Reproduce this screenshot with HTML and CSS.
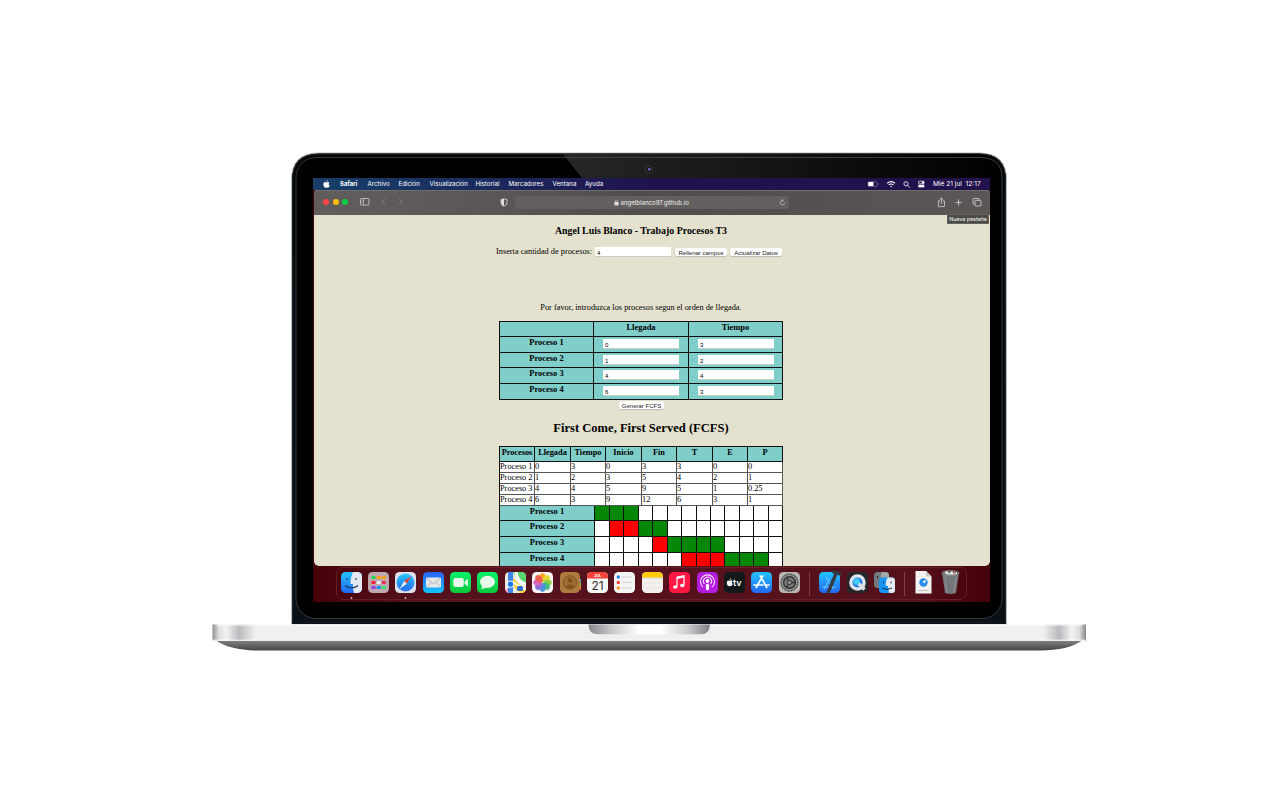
FILE: index.html
```html
<!DOCTYPE html>
<html lang="es">
<head>
<meta charset="utf-8">
<title>Trabajo Procesos T3</title>
<link rel="stylesheet" href="styles.css">
</head>
<body>
<main class="laptop">
  <section class="lid">
    <svg class="lid-art" width="716" height="473" viewBox="0 0 716 473">
      <defs>
        <linearGradient id="glare"><stop offset="0" stop-color="#272727"/><stop offset=".25" stop-color="#1c1c1c"/><stop offset="1" stop-color="#000"/></linearGradient>
        <linearGradient id="edge" x2="0" y2="1"><stop offset="0" stop-color="#050707"/><stop offset="1" stop-color="#0a1116"/></linearGradient>
      </defs>
      <path d="M.5 472.500V28Q.5 1 28 1H688Q715.500 1 715.500 28V472.500Z" fill="url(#edge)" stroke="#b6b8ba" stroke-width="1"/>
      <path d="M1.500 471V28.500Q1.500 2 28 2H688Q714.500 2 714.500 28.500V471" fill="none" stroke="#20272b"/>
      <rect x="5" y="5.500" width="706" height="461" rx="20" fill="#000" stroke="#31373b"/>
      <path d="M272 2H688Q712 3 712 28V50H300L291 26Z" fill="url(#glare)"/>
      <path d="M274 5.500H690Q711 6 711 26V50" fill="none" stroke="#3b4144"/>
      <circle cx="358" cy="17.500" r="3.500" fill="#151517" stroke="#414148" stroke-width=".8"/>
      <circle cx="358.300" cy="17.300" r="1.400" fill="#6c6bc0"/>
      <path d="M1 470.500H715" stroke="#171724"/>
    </svg>
    <div class="screen">
      <header class="menubar">
        <svg class="apple" width="7" height="8" viewBox="0 0 14 16"><path fill="#fff" d="M9.500 0Q9.800 2.500 7 3.800Q6.700 1.300 9.500 0M7 5Q8 4 10 4Q12 4.200 13 5.600Q9.600 8 13.400 11Q12 15.500 9.600 15.500Q7 14.600 5 15.500Q2.500 15.500 1 11Q-.3 5.500 3.500 4.200Q5 4 7 5"/></svg>
        <nav class="menus"><b class="m1">Safari</b><span class="m2">Archivo</span><span class="m3">Edición</span><span class="m4">Visualización</span><span class="m5">Historial</span><span class="m6">Marcadores</span><span class="m7">Ventana</span><span>Ayuda</span></nav>
        <svg class="status" width="60" height="9" viewBox="0 0 60 9" fill="none" stroke="#fff">
          <rect x="1" y="1.700" width="9" height="4.800" rx="1.200" stroke="#6f6599" stroke-width=".8"/><rect x="1.300" y="2.100" width="5.200" height="4" rx=".6" fill="#fff" stroke="none"/><path d="M11.300 3.300v1.700" stroke="#6f6599" stroke-width=".8"/>
          <path d="M20.200 3.200q3.900-3.200 7.800 0M21.700 4.900q2.400-1.900 4.800 0" stroke-width="1.100"/><path d="M23 5.900h2.200l-1.100 1.400z" fill="#fff" stroke="none"/>
          <circle cx="39" cy="3.800" r="2.100" stroke-width=".8"/><path d="m40.600 5.400 2.200 2.200" stroke-width=".9"/>
          <rect x="51.500" y="1.200" width="5.600" height="2.500" rx=".8" stroke-width=".7"/><path d="M51.300 4.700h6v2.700h-6z" fill="#fff" stroke="none"/><path d="M55 1.500h2v2h-2z" fill="#fff" stroke="none"/>
        </svg>
        <span class="clock">Mié 21 jul&nbsp; 12:17</span>
      </header>
      <section class="window">
        <div class="toolbar">
          <i class="light red"></i><i class="light yellow"></i><i class="light lime"></i>
          <svg class="nav-icons" width="45" height="10" viewBox="0 0 45 10" fill="none" stroke="#d0cecd" stroke-width=".8"><rect x=".5" y="1.500" width="8.400" height="6.600" rx=".8"/><path d="M3.500 1.600v6.500M1.500 3h1M1.500 4.200h1M1.500 5.400h1" stroke-width=".7"/><path d="m25.500 2-3.500 2.900 3.500 2.900M39 2l3.500 2.900L39 7.800" stroke="#898585"/></svg>
          <svg class="shield" width="8" height="9" viewBox="0 0 8 9"><path d="M4 .8 7 1.600V4.500Q7 7 4 8.200Q1 7 1 4.500V1.600Z" fill="none" stroke="#dcdada" stroke-width=".8"/><path d="M4 .8V8.200Q1 7 1 4.500V1.600Z" fill="#dcdada"/></svg>
          <div class="address">
            <svg width="5" height="7" viewBox="0 0 5 7"><rect x=".4" y="2.900" width="4.200" height="3.500" rx=".6" fill="#ddd"/><path d="M1.300 3V1.900q1.200-1.600 2.400 0V3" fill="none" stroke="#ddd" stroke-width=".7"/></svg>
            <span>angelblanco97.github.io</span>
            <svg class="reload" width="7" height="7" viewBox="0 0 7 7"><path d="M5.700 3.600A2.200 2.200 0 1 1 4 1.500M3 .2 4.400 1.500 3.100 2.700" fill="none" stroke="#c2c0c0" stroke-width=".7"/></svg>
          </div>
          <svg class="actions" width="46" height="11" viewBox="0 0 46 11" fill="none" stroke="#dad8d8" stroke-width=".8"><path d="M3 3.800H1.400V9.600H7.400V3.800H5.800M4.400 7V.9M2.800 2.500 4.400.9 6 2.500M21.600 2.300V8.500M18.500 5.400H24.700"/><rect x="38" y="3.300" width="6" height="5.700" rx="1"/><path d="M37.800 7.300H37Q36.100 7.300 36.100 6.500V2.300Q36.100 1.400 37 1.400H41.300Q42.200 1.400 42.200 3"/></svg>
          <span class="tooltip">Nueva pestaña</span>
        </div>
        <article class="page">
          <h3>Angel Luis Blanco - Trabajo Procesos T3</h3>
          <div class="count"><label>Inserta cantidad de procesos:</label><span class="field">4</span><span class="button b1">Rellenar campos</span><span class="button b2">Actualizar Datos</span></div>
          <p>Por favor, introduzca los procesos segun el orden de llegada.</p>
          <div class="grid inputs">
            <b></b><b>Llegada</b><b>Tiempo</b>
            <b>Proceso 1</b><div><span class="field">0</span></div><div><span class="field">3</span></div>
            <b>Proceso 2</b><div><span class="field">1</span></div><div><span class="field">2</span></div>
            <b>Proceso 3</b><div><span class="field">4</span></div><div><span class="field">4</span></div>
            <b>Proceso 4</b><div><span class="field">6</span></div><div><span class="field">3</span></div>
          </div>
          <span class="button generate">Generar FCFS</span>
          <h2>First Come, First Served (FCFS)</h2>
          <div class="grid results">
            <b>Procesos</b><b>Llegada</b><b>Tiempo</b><b>Inicio</b><b>Fin</b><b>T</b><b>E</b><b>P</b>
            <div>Proceso 1</div><div>0</div><div>3</div><div>0</div><div>3</div><div>3</div><div>0</div><div>0</div>
            <div>Proceso 2</div><div>1</div><div>2</div><div>3</div><div>5</div><div>4</div><div>2</div><div>1</div>
            <div>Proceso 3</div><div>4</div><div>4</div><div>5</div><div>9</div><div>5</div><div>1</div><div>0.25</div>
            <div>Proceso 4</div><div>6</div><div>3</div><div>9</div><div>12</div><div>6</div><div>3</div><div>1</div>
          </div>
          <div class="grid gantt">
            <b>Proceso 1</b><i class="run"></i><i class="run"></i><i class="run"></i><i></i><i></i><i></i><i></i><i></i><i></i><i></i><i></i><i></i><i></i>
            <b>Proceso 2</b><i></i><i class="wait"></i><i class="wait"></i><i class="run"></i><i class="run"></i><i></i><i></i><i></i><i></i><i></i><i></i><i></i><i></i>
            <b>Proceso 3</b><i></i><i></i><i></i><i></i><i class="wait"></i><i class="run"></i><i class="run"></i><i class="run"></i><i class="run"></i><i></i><i></i><i></i><i></i>
            <b>Proceso 4</b><i></i><i></i><i></i><i></i><i></i><i></i><i class="wait"></i><i class="wait"></i><i class="wait"></i><i class="run"></i><i class="run"></i><i class="run"></i><i></i>
          </div>
        </article>
      </section>
      <footer class="dock">
        <svg class="open" viewBox="0 0 21 21"><defs><linearGradient id="blue" x2="0" y2="1"><stop stop-color="#22c3ff"/><stop offset="1" stop-color="#2366f2"/></linearGradient><linearGradient id="mail" x2="0" y2="1"><stop stop-color="#2b62f5"/><stop offset="1" stop-color="#12c4ff"/></linearGradient><linearGradient id="green" x2="0" y2="1"><stop stop-color="#08f36b"/><stop offset="1" stop-color="#08c83b"/></linearGradient><clipPath id="tile"><rect width="21" height="21" rx="4.600"/></clipPath></defs><g clip-path="url(#tile)"><path fill="url(#blue)" d="M0 0h21v21H0z"/><path fill="#e4e9f2" d="M12 0Q9 6 9.500 12H12Q11.500 17 13 21H21V0Z"/></g><path d="M6 6v2M15 6v2M4 13.500q6.500 5 13 0" fill="none" stroke="#19324d" stroke-width="1.100"/></svg>
        <svg viewBox="0 0 21 21"><rect width="21" height="21" rx="4.600" fill="#bda9af"/><path d="M3.500 4h4v3h-4z" fill="#22d957"/><path d="M8.700 4h4v3h-4zM13.800 4h4v3h-4z" fill="#ff9d13"/><path d="M3.500 9h4v3h-4z" fill="#f52443"/><path d="M8.700 9h4v3h-4z" fill="#e6eef4"/><path d="M13.800 9h4v3h-4z" fill="#ed3052"/><path d="M3.500 14h4v3h-4z" fill="#a136e5"/><path d="M8.700 14h4v3h-4z" fill="#198cf0"/><path d="M13.800 14h4v3h-4z" fill="#2ee46a"/></svg>
        <svg class="open" viewBox="0 0 21 21"><rect width="21" height="21" rx="4.600" fill="#dfe2ea"/><circle cx="10.500" cy="10.500" r="9" fill="url(#blue)"/><circle cx="10.500" cy="10.500" r="7.500" fill="none" stroke="#a8dcff" stroke-width=".6" stroke-dasharray=".5 1"/><path d="M16.500 4 9.200 9 11.700 11.700Z" fill="#f24037"/><path d="M4.500 17 9.200 9 11.700 11.700Z" fill="#eef3fa"/></svg>
        <svg viewBox="0 0 21 21"><rect width="21" height="21" rx="4.600" fill="url(#mail)"/><rect x="3" y="5.500" width="15" height="10" rx="1.200" fill="#e7e7e8"/><path d="m3.500 6 7 6 7-6M3.500 15l5.300-5M17.500 15l-5.300-5" fill="none" stroke="#92a2b3" stroke-width=".7"/></svg>
        <svg viewBox="0 0 21 21"><rect width="21" height="21" rx="4.600" fill="url(#green)"/><rect x="3.300" y="6" width="10.500" height="9" rx="2.200" fill="#eaf5ec"/><path d="m14.500 9.500 3.500-2.700v7.700l-3.500-2.800z" fill="#dff4e4"/></svg>
        <svg viewBox="0 0 21 21"><rect width="21" height="21" rx="4.600" fill="url(#green)"/><ellipse cx="10.500" cy="9.900" rx="7.400" ry="6.200" fill="#e7f8eb"/><path d="M5 13 4.500 17Q7.500 17 9 15" fill="#dff4e4"/></svg>
        <svg viewBox="0 0 21 21"><g clip-path="url(#tile)"><path fill="#eeeae0" d="M0 0h21v21H0z"/><path fill="#57d66d" d="M8 0h13v12Q13 12 8 0"/><path d="M11 0Q12 10 21 12" fill="none" stroke="#fff" stroke-width="3"/><path d="M8 6 21 19v2H15L8 14Z" fill="#ffd53e"/><path d="M3 0v21H8V0Z" fill="#3f86eb"/><path d="M0 17 9 11 21 18" stroke="#fff" fill="none" stroke-width="1.500"/><path d="M0 17h3v4H0z" fill="#f39ab6"/></g><circle cx="5.500" cy="12.200" r="3.200" fill="#1473ef" stroke="#fff"/><rect x="12" y="14" width="6" height="5" rx="1.500" fill="#3270d0"/></svg>
        <svg viewBox="0 0 21 21"><rect width="21" height="21" rx="4.600" fill="#f5f4f3"/><g opacity=".92"><ellipse cx="10.500" cy="5.500" rx="3.100" ry="4.200" fill="#ff9d12"/><ellipse cx="10.500" cy="5.500" rx="3.100" ry="4.200" fill="#e8d91e" transform="rotate(45 10.500 10.500)"/><ellipse cx="10.500" cy="5.500" rx="3.100" ry="4.200" fill="#8dcf36" transform="rotate(90 10.500 10.500)"/><ellipse cx="10.500" cy="5.500" rx="3.100" ry="4.200" fill="#36b978" transform="rotate(135 10.500 10.500)"/><ellipse cx="10.500" cy="5.500" rx="3.100" ry="4.200" fill="#3b8be0" transform="rotate(180 10.500 10.500)"/><ellipse cx="10.500" cy="5.500" rx="3.100" ry="4.200" fill="#8068d5" transform="rotate(225 10.500 10.500)"/><ellipse cx="10.500" cy="5.500" rx="3.100" ry="4.200" fill="#d65cbc" transform="rotate(270 10.500 10.500)"/><ellipse cx="10.500" cy="5.500" rx="3.100" ry="4.200" fill="#f05245" transform="rotate(315 10.500 10.500)"/></g></svg>
        <svg viewBox="0 0 21 21"><path d="M19 7h2v3.500h-2z" fill="#48aee0"/><path d="M19 10.500h2V14h-2z" fill="#69c43e"/><path d="M19 14h2v3.500h-2z" fill="#f08d2e"/><rect width="20" height="21" rx="4.600" fill="#ac793e"/><circle cx="10" cy="10.500" r="6.700" fill="#a16c32" stroke="#80511f" stroke-width=".9"/><circle cx="10" cy="8.500" r="2.400" fill="#80511f"/><path d="M5.500 15q4.500-5.500 9 0-4.500 3.500-9 0" fill="#80511f"/></svg>
        <svg viewBox="0 0 21 21"><g clip-path="url(#tile)"><path fill="#f8f7f7" d="M0 0h21v21H0z"/><path fill="#f2403a" d="M0 0h21v6.500H0z"/></g><text class="month" x="10.500" y="5.300">JUL</text><text class="day" x="10.500" y="17.500">21</text></svg>
        <svg viewBox="0 0 21 21"><rect width="21" height="21" rx="4.600" fill="#f6f5f5"/><circle cx="4.300" cy="5" r="1.700" fill="#227cf1"/><circle cx="4.300" cy="10.500" r="1.700" fill="#f44335"/><circle cx="4.300" cy="16" r="1.700" fill="#ff9423"/><path d="M8 5h10M8 10.500h10M8 16h10" stroke="#c9c8ca" stroke-width=".8"/></svg>
        <svg viewBox="0 0 21 21"><g clip-path="url(#tile)"><path fill="#f2efec" d="M0 0h21v21H0z"/><path fill="#ffcc06" d="M0 0h21v5.500H0z"/></g><path d="M0 6h21" stroke="#a69b80" stroke-width=".5" stroke-dasharray=".6"/><path d="M2 11h17M2 16h17" stroke="#dfdcda" stroke-width=".4"/></svg>
        <svg viewBox="0 0 21 21"><rect width="21" height="21" rx="4.600" fill="#ff1843"/><path d="M8 14.500V5.300l7-1.500v9" fill="none" stroke="#fff" stroke-width="1.200"/><path d="M8 6l7-1.500" stroke="#fff" stroke-width="1.800"/><ellipse cx="6.300" cy="15" rx="2.200" ry="1.700" fill="#fff"/><ellipse cx="13.300" cy="13.500" rx="2.200" ry="1.700" fill="#fff"/></svg>
        <svg viewBox="0 0 21 21"><rect width="21" height="21" rx="4.600" fill="#b41ddd"/><path d="M6 15.200a7 7 0 1 1 9 0M7.500 12a4 4 0 1 1 6 0" fill="none" stroke="#f5dfff" stroke-width="1.100"/><circle cx="10.500" cy="9" r="1.900" fill="#fff"/><rect x="8.900" y="11.700" width="3.200" height="6.500" rx="1.500" fill="#fff"/></svg>
        <svg viewBox="0 0 21 21"><rect width="21" height="21" rx="4.600" fill="#151819"/><path d="M7 6q.2 1.500-1.400 2Q5.500 6.500 7 6M5.500 8.700q2.300-1 3.200.2-1.800 1.300.1 3-1.400 3-3.300 2.100-2 .7-2.700-2.500-.2-3.500 2.700-2.800" fill="#fff"/><text class="tv" x="9" y="14">tv</text></svg>
        <svg viewBox="0 0 21 21"><rect width="21" height="21" rx="4.600" fill="url(#blue)"/><path d="m11.700 4-6.500 11.500M9.300 4l6.500 11.500M3 13h9M14.500 13H18" stroke="#fff" stroke-width="1.700" stroke-linecap="round"/></svg>
        <svg viewBox="0 0 21 21"><rect width="21" height="21" rx="4.600" fill="#b8b7b2"/><circle cx="10.500" cy="10.500" r="8.300" fill="#a6a6a3" stroke="#454646" stroke-width="1.700" stroke-dasharray="1 .5"/><circle cx="10.500" cy="10.500" r="5.900" fill="#797979" stroke="#393b3c" stroke-width="1.700"/><path d="m10.500 10.500-3-5M10.500 10.500h6M10.500 10.500l-3 5" stroke="#303233" stroke-width="1.300"/><circle cx="10.500" cy="10.500" r="2" fill="#999" stroke="#303233"/></svg>
        <i class="sep s1"></i>
        <svg viewBox="0 0 21 21"><rect width="21" height="21" rx="4.600" fill="url(#blue)"/><path d="M3 15h14M5 17.500l6-12M7 5l7 12" stroke="#7bc8ff" fill="none" stroke-width=".9"/><path d="M11.500-.3Q16-3 21 .3L23 2 21.500 3.500 18.200 3 10.500 21.500 7.300 20.500 15 2Z" fill="#36393f"/></svg>
        <svg viewBox="0 0 21 21"><rect width="21" height="21" rx="4.600" fill="#262629"/><circle cx="10.500" cy="10.500" r="6.700" fill="#247ee8" stroke="#dfe6ee" stroke-width="3.200"/><path d="m11.500 11.500 6 6" stroke="#dfe2e5" stroke-width="3.300"/><circle cx="9.500" cy="9.500" r="3.200" fill="#42cbf8"/></svg>
        <svg viewBox="0 0 21 21"><rect width="15" height="16" rx="3.500" fill="#73787c"/><path d="M8 0Q5 7 8 13H15V3.500Q15 0 11 0Z" fill="#a3a8ab"/><path d="M3.500 4v2" stroke="#222"/><rect x="5" y="5.500" width="16" height="15.500" rx="3.500" fill="#1696f6"/><path d="M14 5.500Q11 9 12 14h2l1 7h3q3 0 3-3V9q0-3.500-3-3.500z" fill="#e8edf3"/><path d="M9.500 9.500v2M17 9.500v2M8 16q5 3 10 0" fill="none" stroke="#17304b"/></svg>
        <i class="sep s2"></i>
        <svg viewBox="0 0 21 21"><path d="M2.500-1H13l5.500 5.500V21.500h-16z" fill="#f3f3f1"/><path d="M13-1v5.500h5.500z" fill="#c9c8c6"/><circle cx="10.500" cy="10.500" r="4.200" fill="#258cf0"/><path d="m13.500 7.500-4 2 2 2z" fill="#fff"/><path d="M5 18.500h11" stroke="#b6b6b6" stroke-width=".8"/></svg>
        <svg viewBox="0 0 21 21"><path d="M2 1h17l-3 20q-5.500 2-11 0z" fill="#73777a"/><path d="M5 5l2 15M16 5l-2 15" stroke="#8b8f91" stroke-width="1.200"/><ellipse cx="10.500" cy="1" rx="8.500" ry="2.300" fill="#45484b" stroke="#a5a8aa" stroke-width=".8"/><path d="M4 1 7-1.300 9 1l3-2 2 2.500 3-1.500v2l-5 .7-5-.2z" fill="#e0e1dd"/><path d="M8 0h2v1.200H8z" fill="#51a860"/><path d="M13 0h2v1.200h-2z" fill="#d6564d"/></svg>
      </footer>
    </div>
  </section>
  <svg class="base" width="875" height="28" viewBox="0 0 875 28">
    <defs>
      <linearGradient id="leftmetal" gradientUnits="userSpaceOnUse" x1="0" x2="45"><stop stop-color="#88898b"/><stop offset=".15" stop-color="#dedfe0"/><stop offset=".32" stop-color="#f3f3f3"/><stop offset=".6" stop-color="#b9babd"/><stop offset=".95" stop-color="#eef0ef"/></linearGradient>
      <linearGradient id="rightmetal" gradientUnits="userSpaceOnUse" x1="874" x2="829"><stop stop-color="#88898b"/><stop offset=".15" stop-color="#dedfe0"/><stop offset=".32" stop-color="#f3f3f3"/><stop offset=".6" stop-color="#b9babd"/><stop offset=".95" stop-color="#eef0ef"/></linearGradient>
      <linearGradient id="under" x2="0" y2="1"><stop stop-color="#858587"/><stop offset="1" stop-color="#454548"/></linearGradient>
      <linearGradient id="notch"><stop stop-color="#88898c"/><stop offset=".2" stop-color="#c9cacc"/><stop offset=".42" stop-color="#fff"/><stop offset=".6" stop-color="#fff"/><stop offset=".82" stop-color="#c9cacc"/><stop offset="1" stop-color="#808184"/></linearGradient>
    </defs>
    <path d="M3 16H871Q856 26.500 828 26.500H47Q18 26.500 3 16Z" fill="url(#under)"/>
    <path d="M.5.500H874V16.500H.5Z" fill="#eef0ef"/>
    <path d="M.5.500H45V16.500H.5Z" fill="url(#leftmetal)"/><path d="M829 .5H874V16.500H829Z" fill="url(#rightmetal)"/>
    <path d="M5 1H870M1 16.200H873" stroke="#fff"/>
    <path d="M376.500.500H498Q497.500 10.300 489 10.300H386Q376.500 10.300 376.500.500Z" fill="url(#notch)"/>
  </svg>
</main>
</body>
</html>
```
FILE: styles.css
```css
* { box-sizing: border-box; }
body { margin: 0; width: 1280px; height: 800px; overflow: hidden; background: #fff; padding: 152px 0 0 212px; }
svg { display: block; flex: none; }
.laptop { width: 875px; }
.lid { display: grid; width: 716px; height: 473px; margin-left: 79px; margin-bottom: -1px; }
.lid-art, .screen { grid-area: 1 / 1; }
.base { position: relative; }
.screen { width: 677px; height: 424px; margin: 26px 0 0 22px; overflow: hidden; background: linear-gradient(90deg, #45000a, #56121c 15%, #56121c 88%, #450009); font-family: Inter, "Liberation Sans", sans-serif; }

.menubar { display: flex; align-items: center; height: 12px; background: linear-gradient(90deg, #173f69, #1a2b5e 25%, #20134c 50%, #21114c); color: #fff; font-size: 6.2px; line-height: 12px; white-space: nowrap; padding-right: 8px; }
.menus b { font-size: 6px; }
.apple { margin-left: 10px; margin-top: -1px; }
.menus { display: flex; margin-left: 10px; }
.m1 { width: 27.500px; } .m2 { width: 31px; } .m3 { width: 31px; } .m4 { width: 46px; }
.m5 { width: 33px; } .m6 { width: 44px; } .m7 { width: 32.500px; }
.status { margin-left: auto; margin-right: 6px; }
.clock { width: 49px; font-size: 6.6px; }

.window { height: 376px; margin-left: 1px; border-radius: 4px 4px 5px 5px; overflow: hidden; background: #e4e2ce; }
.toolbar { position: relative; display: flex; align-items: center; height: 25px; padding: 0 0 2px 9px; background: linear-gradient(90deg, #615d5d, #5b5756 25%, #504c4b 50%, #5b5756); border-top: 1px solid #716e70; }
.light { width: 6px; height: 6px; border-radius: 50%; margin-right: 3.5px; }
.red { background: #ff4548; } .yellow { background: #ffbd04; } .lime { background: #09d043; }
.nav-icons { margin-left: 8px; }
.shield { margin-left: 95px; }
.address { display: flex; align-items: center; width: 274px; height: 13px; margin-left: 7px; padding-left: 99px; border-radius: 3px; background: #625f5e; color: #f5f4f4; font-size: 6.1px; line-height: 13px; }
.address span { margin-left: 2px; width: 69px; white-space: nowrap; }
.reload { margin-left: auto; margin-right: 3px; }
.actions { margin-left: 148px; }
.tooltip { position: absolute; right: 1px; top: 23px; width: 42px; height: 10px; background: #4b4a45; border: .5px solid #65645c; color: #fff; font-size: 5.3px; line-height: 9px; text-align: center; white-space: nowrap; }

.page { width: 654px; height: 351px; padding-top: 9px; color: #000; font: 8.46px/10px "Liberation Serif", serif; }
.page h3 { margin: 0; font-size: 9.9px; line-height: 13px; text-align: center; }
.count { display: flex; align-items: center; height: 11px; margin: 9px 0 0 182px; }
.count label { width: 99px; font-size: 8.3px; }
.field { display: block; width: 76px; height: 10px; padding-left: 2px; background: #fff; border-bottom: 1px solid #c7cdc8; font: 6px/12px "Liberation Sans", sans-serif; }
.button { display: block; height: 8px; background: #fff; border-radius: 2px; box-shadow: 0 .5px 1px #bbb; color: #222; font: 6px/10px "Liberation Sans", sans-serif; text-align: center; white-space: nowrap; }
.b1 { width: 52px; margin-left: 4px; } .b2 { width: 52px; margin-left: 3px; }
.page p { height: 10px; margin: 46px 0 8px; font-size: 8.3px; text-align: center; }
.grid { display: grid; width: 284px; margin-left: 185px; border-left: 1px solid #111; }
.grid > * { border-right: 1px solid #111; border-bottom: 1px solid #111; min-width: 0; }
.grid b { background: #7fceca; text-align: center; line-height: 10px; white-space: nowrap; }
.inputs { grid-template: 15px 16px 15px 16px 16px / 94px 95px 94px; border-top: 1px solid #111; }
.inputs > div { background: #7fceca; padding: 2px 0 0 9px; }
.generate { width: 45px; height: 8px; margin: 1px 0 0 305px; }
.page h2 { margin: 11px 0 10px; font-size: 12.55px; line-height: 16px; text-align: center; }
.results { grid-template: 15px repeat(4, 11px) / 35px 36px 35px 36px 35px 36px 35px 35px; border-top: 1px solid #111; }
.results > div { background: #fff; border-color: #555; line-height: 10px; white-space: nowrap; font-size: 8.3px; }
.results > b { font-size: 8.3px; line-height: 11px; }
.gantt { grid-template: 15px 16px 16px 16px / 95px 15px 14px 15px 14px 15px 14px 15px 14px 14px 15px 14px 15px 14px; }
.gantt i { background: #fff; }
.gantt .run { background: #078708; }
.gantt .wait { background: #fe0000; }

.dock { display: flex; gap: 6.4px; width: 631px; height: 33px; margin: 1px 0 0 23px; padding: 4px 0 0 3.5px; border: 1px solid #632029; border-radius: 7px; }
.dock svg { width: 21px; height: 21px; overflow: visible; }
.dock .open { height: 28px; padding-bottom: 7px; background: radial-gradient(circle at 10.5px 26px, #d1aeb2 0 .8px, transparent 1.2px); }
.sep { width: 1px; height: 24px; background: #7b3d46; }
.s1 { margin: 0 2.5px 0 3.2px; }
.s2 { margin: 0 2px 0 2.2px; }
.month { fill: #fff; font: bold 4px Inter, sans-serif; text-anchor: middle; }
.day { fill: #303030; font: 12px Inter, sans-serif; text-anchor: middle; }
.tv { fill: #fff; font: 600 9px Inter, sans-serif; }
```
